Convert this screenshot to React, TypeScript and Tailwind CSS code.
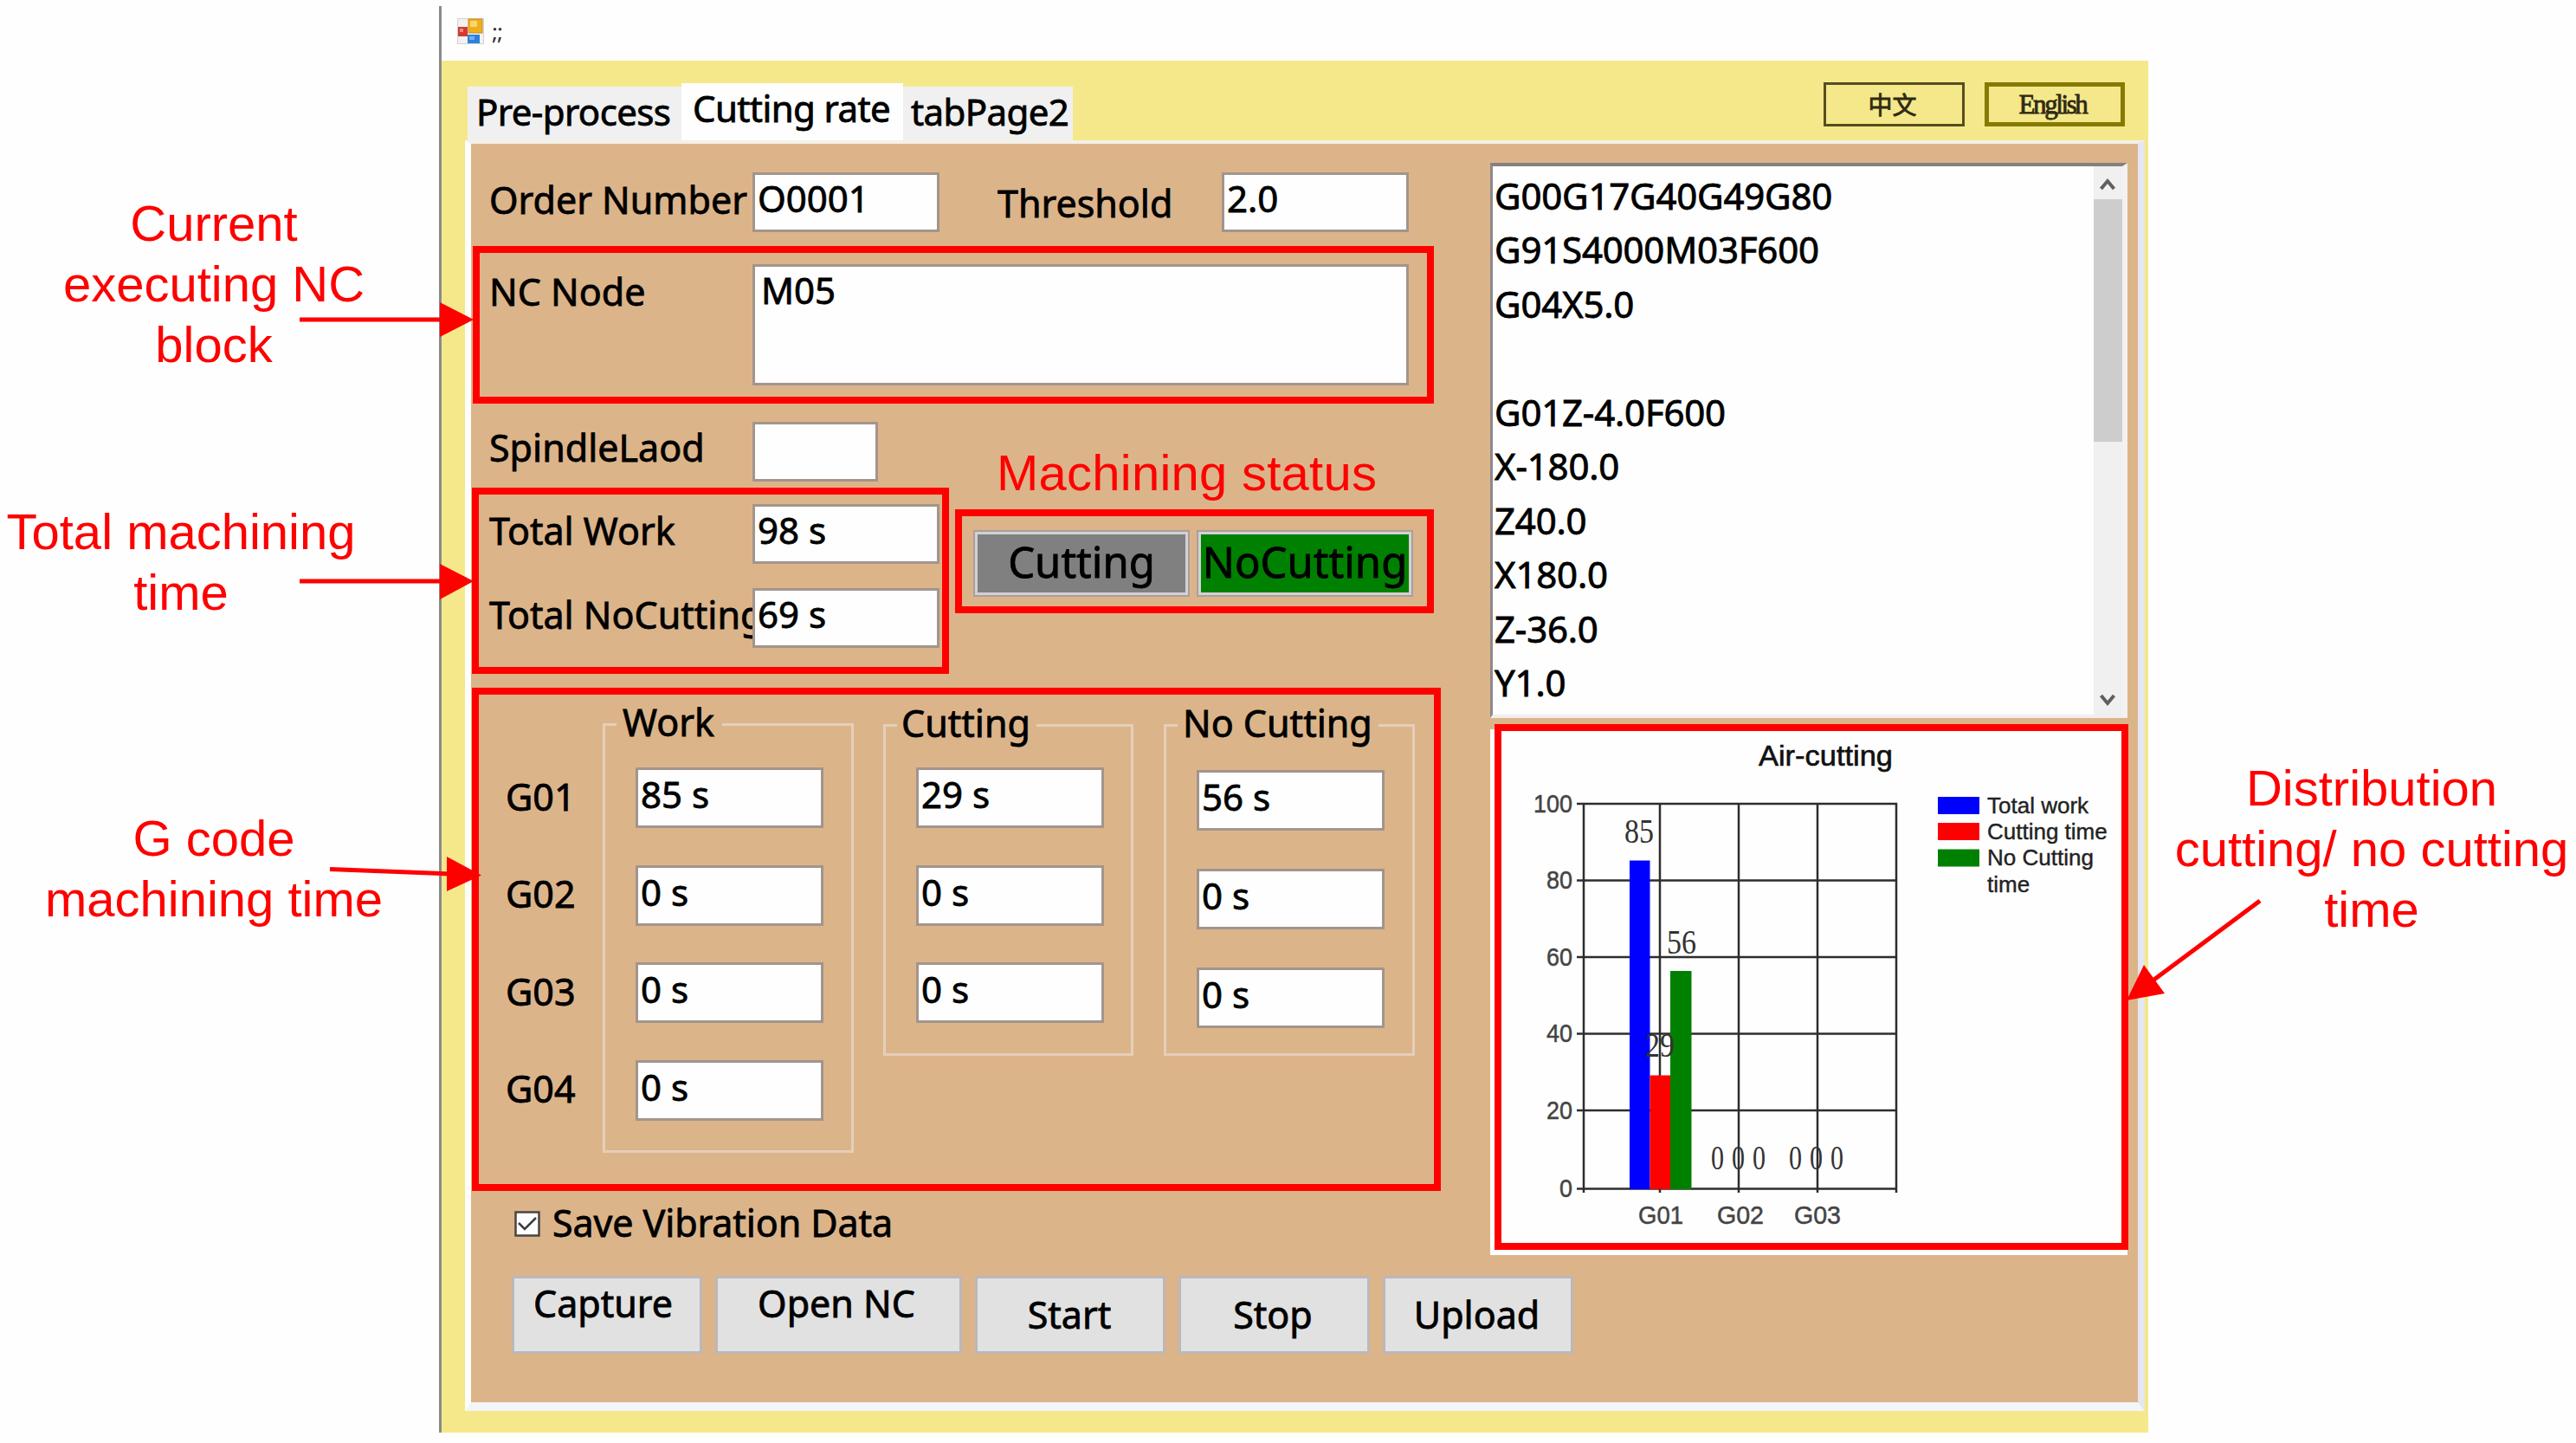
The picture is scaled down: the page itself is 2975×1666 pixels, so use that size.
import React from 'react';
import { clsx } from 'clsx';

const ncLines = [
  'G00G17G40G49G80',
  'G91S4000M03F600',
  'G04X5.0',
  '',
  'G01Z-4.0F600',
  'X-180.0',
  'Z40.0',
  'X180.0',
  'Z-36.0',
  'Y1.0',
];

const gridX = [1829, 1917, 2008, 2099, 2190];
const gridY = [
  { value: '100', y: 928 },
  { value: '80', y: 1016.5 },
  { value: '60', y: 1105 },
  { value: '40', y: 1193.5 },
  { value: '20', y: 1282 },
  { value: '0', y: 1372.5 },
];

const bars = [
  { x: 1882, top: 993.5, width: 23.5, fill: '#0000ff' },
  { x: 1905.5, top: 1241.5, width: 23.5, fill: '#ff0000' },
  { x: 1929, top: 1121, width: 24.5, fill: '#008000' },
];

const barLabels = [
  { text: '85', x: 1876, y: 973 },
  { text: '29', x: 1900, y: 1220 },
  { text: '56', x: 1925, y: 1101 },
];

const zeroLabels = [1976, 2000, 2024, 2066, 2090, 2114];

const categories = [
  { text: 'G01', x: 1892, width: 52 },
  { text: 'G02', x: 1983, width: 54 },
  { text: 'G03', x: 2072, width: 54 },
];

const legend = [
  { lines: ['Total work'], y: 920, fill: '#0000ff' },
  { lines: ['Cutting time'], y: 950, fill: '#ff0000' },
  { lines: ['No Cutting', 'time'], y: 980.5, fill: '#008000' },
];

interface FieldProps {
  value?: string;
  className?: string;
}

function Field({ value, className }: FieldProps) {
  return (
    <div
      className={clsx(
        'relative shrink-0 border-[3px] border-[#a2958c] bg-[#fefefe] pl-[3px] text-[42px] leading-none whitespace-pre',
        className ?? 'h-[69px] w-[216px] pt-[6px]',
      )}
    >
      {value}
    </div>
  );
}

function Label({ children, className }: { children: string; className: string }) {
  return <div className={clsx('shrink-0 text-[43px] leading-none whitespace-nowrap', className)}>{children}</div>;
}

interface GroupProps {
  title: string;
  values: string[];
  className: string;
  legendClassName: string;
  listClassName: string;
}

function Group({ title, values, className, legendClassName, listClassName }: GroupProps) {
  return (
    <fieldset className={clsx('shrink-0 border-[3px] border-[#e4cfb9]', className)}>
      <legend className={clsx('ml-[13px] pb-[5px] text-[43px] leading-none whitespace-nowrap', legendClassName)}>
        {title}
      </legend>
      <div className={clsx('flex flex-col', listClassName)}>
        {values.map((value, i) => (
          <Field key={i} value={value} className="h-[70px] w-[217px] pt-[7px]" />
        ))}
      </div>
    </fieldset>
  );
}

function PushButton({ children, className }: { children: React.ReactNode; className: string }) {
  return (
    <div
      className={clsx(
        'h-[90px] shrink-0 border-[3px] border-[#bdb7b8] bg-[#e1e1e1] text-center text-[43px] leading-none whitespace-nowrap',
        className,
      )}
    >
      {children}
    </div>
  );
}

function StatusLamp({ children, className }: { children: string; className: string }) {
  return (
    <div className="h-[77px] w-[250px] border-2 border-[#a89f9b] bg-[#d4d0d4] p-[3px]">
      <div className={clsx('flex h-full justify-center pt-[7px] text-[49px] leading-none whitespace-nowrap', className)}>
        {children}
      </div>
    </div>
  );
}

function AppIcon() {
  return (
    <svg width="31" height="30" viewBox="0 0 31 30">
      <rect x="0.5" y="0.5" width="30" height="29" fill="#f1f1f1" stroke="#d2d2d2" />
      <rect x="1" y="10" width="11" height="11" fill="#d03a34" />
      <rect x="3" y="12" width="4" height="4" fill="#e88a84" />
      <rect x="13" y="1" width="16" height="16" fill="#f0ae1c" stroke="#c98b22" strokeWidth="1" />
      <rect x="15" y="3" width="8" height="7" fill="#fbd568" />
      <rect x="12" y="19" width="14" height="10" fill="#2f7fdc" />
      <rect x="14" y="21" width="6" height="4" fill="#6eb2f4" />
    </svg>
  );
}

function Chart() {
  return (
    <svg
      className="block [-webkit-text-stroke:0px]"
      width="736"
      height="607"
      viewBox="1721 842 736 607"
      fontFamily='"Liberation Sans", sans-serif'
    >
      <text x="2031" y="884" fontSize="33" textLength="155" lengthAdjust="spacingAndGlyphs" fill="#111" stroke="#111" strokeWidth="0.6">
        Air-cutting
      </text>

      {/* Grid and axes */}
      <g stroke="#2d2d2d" strokeWidth="2.5">
        {gridY.map((row) => (
          <line key={row.value} x1="1821" x2="2191" y1={row.y} y2={row.y} />
        ))}
        {gridX.map((x) => (
          <line key={x} x1={x} x2={x} y1="927" y2="1377" />
        ))}
      </g>
      {gridY.map((row) => (
        <text
          key={row.value}
          x={1816 - row.value.length * 15}
          y={row.y + 9.5}
          fontSize="30"
          fill="#444"
          stroke="#444"
          strokeWidth="0.5"
          textLength={row.value.length * 15}
          lengthAdjust="spacingAndGlyphs"
        >
          {row.value}
        </text>
      ))}
      {categories.map((c) => (
        <text
          key={c.text}
          x={c.x}
          y="1413"
          fontSize="29"
          fill="#444"
          stroke="#444"
          strokeWidth="0.5"
          textLength={c.width}
          lengthAdjust="spacingAndGlyphs"
        >
          {c.text}
        </text>
      ))}

      {bars.map((bar) => (
        <rect key={bar.x} x={bar.x} y={bar.top} width={bar.width} height={1373 - bar.top} fill={bar.fill} />
      ))}
      <g fontFamily='"Liberation Serif", serif' fontSize="40" fill="#333">
        {barLabels.map((l) => (
          <text key={l.text} x={l.x} y={l.y} textLength="34" lengthAdjust="spacingAndGlyphs">
            {l.text}
          </text>
        ))}
        {zeroLabels.map((x) => (
          <text key={x} x={x} y="1350" textLength="15" lengthAdjust="spacingAndGlyphs">
            0
          </text>
        ))}
      </g>

      {/* Legend */}
      {legend.map((item) => (
        <g key={item.y}>
          <rect x="2238" y={item.y} width="48" height="20" fill={item.fill} />
          {item.lines.map((line, i) => (
            <text key={line} x="2295" y={item.y + 18.5 + i * 31} fontSize="26" fill="#222" stroke="#222" strokeWidth="0.4">
              {line}
            </text>
          ))}
        </g>
      ))}
    </svg>
  );
}

function NcListBox() {
  return (
    <div className="flex h-[641px] w-[736px] border-t-4 border-r-[6px] border-b-4 border-l-[3px] border-t-[#85807f] border-r-[#f3f1f2] border-b-[#f0eeee] border-l-[#8d888c] bg-[#fefefe]">
      <div className="flex-1 pt-[13px] pl-[2px] text-[42px] tracking-[-0.2px]">
        {ncLines.map((line, i) => (
          <div key={i} className="h-[62.45px] leading-none">
            {line}
          </div>
        ))}
      </div>
      <div className="flex w-[33px] flex-col bg-[#f0f0f0]">
        <svg className="h-[38px] w-[33px]" viewBox="0 0 33 38" fill="none" stroke="#5f5f5f" strokeWidth="4">
          <path d="M8.5 26 L16 17 L23.5 26" />
        </svg>
        <div className="h-[280px] bg-[#cdcdcd]" />
        <svg className="mt-auto h-[38px] w-[33px]" viewBox="0 0 33 38" fill="none" stroke="#5f5f5f" strokeWidth="4">
          <path d="M8.5 16 L16 25 L23.5 16" />
        </svg>
      </div>
    </div>
  );
}

function Callout({ lines, className }: { lines: string[]; className: string }) {
  return (
    <div className={clsx('text-center text-[58px] leading-[70px] whitespace-nowrap', className)}>
      {lines.map((line) => (
        <div key={line}>{line}</div>
      ))}
    </div>
  );
}

function Markers() {
  return (
    <>
      <div className="absolute top-[284px] left-[546px] h-[182px] w-[1110px] border-8 border-[#ff0000]" />
      <div className="absolute top-[563px] left-[545px] h-[215px] w-[551px] border-8 border-[#ff0000]" />
      <div className="absolute top-[588px] left-[1103px] h-[120px] w-[553px] border-8 border-[#ff0000]" />
      <div className="absolute top-[794px] left-[545px] h-[581px] w-[1119px] border-8 border-[#ff0000]" />
      <div className="absolute top-[836px] left-[1726px] h-[607px] w-[732px] border-8 border-[#ff0000]" />
      <div className="absolute top-[511px] left-[1151px] font-['Liberation_Sans',sans-serif] text-[58px] leading-[70px] tracking-[0.25px] whitespace-nowrap text-[#ff0000]">
        Machining status
      </div>
      <svg className="absolute inset-0" width="2975" height="1666" stroke="#ff0000" strokeWidth="5" fill="#ff0000">
        <line x1="346" y1="369" x2="512" y2="369" />
        <path stroke="none" d="M508 349 L547 369 L508 389 Z" />
        <line x1="346" y1="671" x2="512" y2="671" />
        <path stroke="none" d="M508 651 L547 671 L508 692 Z" />
        <line x1="381" y1="1003.5" x2="520" y2="1009" />
        <path stroke="none" d="M516 989 L556 1010.5 L516 1029 Z" />
        <line x1="2610" y1="1040" x2="2485" y2="1133" />
        <path stroke="none" d="M2456 1155 L2476 1114 L2500 1147 Z" />
      </svg>
    </>
  );
}

export default function App() {
  return (
    <div className="relative flex h-[1666px] w-[2975px] overflow-hidden bg-[#fefefe] font-['Noto_Sans','Noto_Sans_CJK_TC',sans-serif] text-black">
      <div className="w-[507px] shrink-0 pt-[223px] font-['Liberation_Sans',sans-serif] text-[#ff0000]">
        <Callout lines={['Current', 'executing NC', 'block']} className="w-[494px]" />
        <Callout lines={['Total machining', 'time']} className="mt-[146px] w-[418px]" />
        <Callout lines={['G code', 'machining time']} className="mt-[214px] w-[494px]" />
      </div>

      <div className="mt-[7px] h-[1647px] w-[1974px] shrink-0 border-l-[3px] border-[#8a8a86] bg-[#f5e88a] [-webkit-text-stroke:0.8px]">
        {/* Title bar */}
        <div className="flex h-[63px] bg-[#fefefe] pt-[14px] pl-[18px]">
          <AppIcon />
          <span className="mt-[2px] ml-[9px] text-[26px] leading-none tracking-[-1px] text-[#333] [-webkit-text-stroke:0px]">;;</span>
        </div>

        {/* Tab strip and language switch */}
        <div className="flex h-[92px] pt-[25px] pr-[27px] pl-[30px]">
          <div className="flex items-end text-[42px] leading-none tracking-[-0.6px]">
            <div className="h-[62px] w-[247px] bg-[#f0f0f0] pt-[8px] pl-[10px] whitespace-nowrap">Pre-process</div>
            <div className="h-[66px] w-[256px] bg-[#fefefe] pt-[8px] pl-[13px] whitespace-nowrap">Cutting rate</div>
            <div className="h-[62px] w-[196px] bg-[#f0f0f0] pt-[8px] pl-[9px] whitespace-nowrap">tabPage2</div>
          </div>
          <div className="ml-auto flex gap-[23px]">
            <div className="flex h-[51px] w-[163px] items-center justify-center border-[3px] border-[#574d20] pr-[4px] pb-[2px] font-['Noto_Sans_CJK_TC',sans-serif] text-[28px] leading-none text-[#2f2a12]">
              中文
            </div>
            <div className="flex h-[51px] w-[162px] items-center justify-center border-[5px] border-[#857b04] pr-[5px] pb-[1px] font-['Liberation_Serif',serif] text-[31px] leading-none tracking-[-2.4px] text-[#2f2a12]">
              English
            </div>
          </div>
        </div>

        <div className="ml-[27px] flex h-[1467px] w-[1940px] border-t-4 border-r-8 border-b-[10px] border-l-[7px] border-t-[#f3f0e8] border-r-[#e4e6f0] border-b-[#f3f6f8] border-l-[#fdfdfb] bg-[#dcb48a]">
          <div className="w-[1177px] shrink-0 pt-[33px] pl-[21px]">
            <div className="flex">
              <Label className="w-[304px] pt-[10px]">Order Number</Label>
              <Field value="O0001" />
              <Label className="ml-[67px] w-[259px] pt-[14px]">Threshold</Label>
              <Field value="2.0" />
            </div>

            <div className="mt-[37px] flex">
              <Label className="w-[304px] pt-[10px]">NC Node</Label>
              <Field value="M05" className="h-[140px] w-[758px] pt-[6px] pl-[7px]" />
            </div>

            <div className="mt-[42px] flex">
              <Label className="w-[304px] pt-[8px]">SpindleLaod</Label>
              <Field className="h-[69px] w-[145px]" />
            </div>

            <div className="mt-[26px] flex h-[165px]">
              <div className="flex flex-col gap-[28px]">
                <div className="flex">
                  <Label className="w-[304px] pt-[9px]">Total Work</Label>
                  <Field value="98 s" />
                </div>
                <div className="flex">
                  <Label className="w-[304px] pt-[9px]">Total NoCutting</Label>
                  <Field value="69 s" />
                </div>
              </div>
              <div className="mt-[30px] ml-[39px] flex gap-[8px]">
                <StatusLamp className="bg-[#808080]">Cutting</StatusLamp>
                <StatusLamp className="bg-[#008000]">NoCutting</StatusLamp>
              </div>
            </div>

            {/* Time per G code */}
            <div className="mt-[65px] flex h-[519px]">
              <div className="flex w-[131px] shrink-0 flex-col gap-[69.3px] pt-[86px] pl-[19px] text-[43px] leading-none">
                <div>G01</div>
                <div>G02</div>
                <div>G03</div>
                <div>G04</div>
              </div>
              <Group
                title="Work"
                values={['85 s', '0 s', '0 s', '0 s']}
                className="h-[519px] w-[290px]"
                legendClassName="pr-[9px] pl-[7px]"
                listClassName="gap-[42.5px] pt-[26px] pl-[35px]"
              />
              <Group
                title="Cutting"
                values={['29 s', '0 s', '0 s']}
                className="mt-[1px] ml-[34px] h-[406px] w-[289px]"
                legendClassName="pr-[7px] pl-[5px]"
                listClassName="gap-[42.5px] pt-[25px] pl-[35px]"
              />
              <Group
                title="No Cutting"
                values={['56 s', '0 s', '0 s']}
                className="mt-[1px] ml-[35px] h-[406px] w-[290px]"
                legendClassName="pr-[7px] pl-[6px]"
                listClassName="gap-[44px] pt-[28px] pl-[35px]"
              />
            </div>

            <div className="mt-[59px] flex pl-[29px] text-[43px] leading-none">
              <svg className="mt-[8px] h-[30px] w-[30px]" viewBox="0 0 30 30">
                <rect x="1.5" y="1.5" width="27" height="27" fill="#fefefe" stroke="#4b4540" strokeWidth="2.5" />
                <path d="M5 14 L12 21 L25 8" fill="none" stroke="#3c3c3c" strokeWidth="2.5" />
              </svg>
              <div className="ml-[14px] tracking-[-0.1px] whitespace-nowrap">Save Vibration Data</div>
            </div>

            <div className="mt-[40px] flex pl-[26px]">
              <PushButton className="w-[220px] pt-[7px] pr-[9px]">Capture</PushButton>
              <PushButton className="ml-[15px] w-[285px] pt-[7px] pr-[5px]">Open NC</PushButton>
              <PushButton className="ml-[15px] w-[220px] pt-[20px] pr-[2px]">Start</PushButton>
              <PushButton className="ml-[15px] w-[221px] pt-[20px] pr-[3px]">Stop</PushButton>
              <PushButton className="ml-[15px] w-[220px] pt-[20px] pr-[3px]">Upload</PushButton>
            </div>
          </div>

          <div className="w-[736px] shrink-0 pt-[22px]">
            <NcListBox />
            <div className="mt-[13px] h-[607px] bg-[#fefefe]">
              <Chart />
            </div>
          </div>
        </div>
      </div>

      <div className="pt-[875px] pl-[22px] font-['Liberation_Sans',sans-serif] text-[#ff0000]">
        <Callout lines={['Distribution', 'cutting/ no cutting', 'time']} className="w-[472px]" />
      </div>

      <Markers />
    </div>
  );
}
